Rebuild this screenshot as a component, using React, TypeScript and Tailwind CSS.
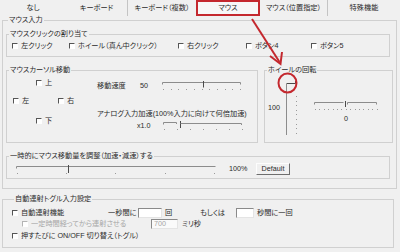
import type { ReactNode } from "react";

function Check({ label, disabled, className }: { label: string; disabled?: boolean; className?: string }) {
  return (
    <span className={`flex items-center ${className ?? ""}`}>
      <span
        className={`w-[6px] h-[6px] shrink-0 bg-white border border-r-white border-b-white ${
          disabled ? "border-l-[#b4b4b4] border-t-[#b4b4b4]" : "border-l-[#555] border-t-[#555]"
        }`}
      />
      <span className={`ml-[3px] whitespace-nowrap ${disabled ? "text-[#a6a6a6]" : ""}`}>{label}</span>
    </span>
  );
}

function Group({ title, className, children }: { title: string; className?: string; children?: ReactNode }) {
  return (
    <fieldset className={`border border-[#d0d0d0] ${className ?? ""}`}>
      <legend className="ml-[2px] px-[1px] leading-[8px] whitespace-nowrap">{title}</legend>
      {children}
    </fieldset>
  );
}

const dots = (n: number, step: number, x0: number, y: number) =>
  Array.from({ length: n }, (_, i) => (
    <rect key={i} x={Math.round(x0 + i * step)} y={y} width="1" height="1" fill="#9a9a9a" />
  ));

function Input({ value, disabled, className }: { value?: string; disabled?: boolean; className?: string }) {
  return (
    <span
      className={`flex items-center h-[10px] pl-[2px] border border-t-[#8a8a8a] border-l-[#8a8a8a] border-r-[#e4e4e4] border-b-[#e4e4e4] ${
        disabled ? "bg-[#fafafa] text-[#a6a6a6]" : "bg-white"
      } ${className ?? ""}`}
    >
      {value}
    </span>
  );
}

export default function App() {
  return (
    <div className="relative w-[400px] h-[252px] overflow-hidden bg-[#f0f0f0] text-[#2a2a2a] text-[7.2px] leading-[8px] [font-family:'Liberation_Sans','Noto_Sans_CJK_JP',sans-serif] [font-feature-settings:'palt']">
      {/* tab strip */}
      <div className="flex h-[16px]">
        <div className="w-[66px] flex items-center justify-center">なし</div>
        <div className="w-[62px] flex items-center justify-center border-r border-[#c4c4c4]">キーボード</div>
        <div className="w-[68px] flex items-center justify-center">キーボード（複数）</div>
        <div className="w-[64px] flex items-center justify-center border-2 border-[#c4282e] bg-[#f7f7f7]">マウス</div>
        <div className="w-[68px] flex items-center justify-center border-r border-[#c4c4c4]">マウス（位置指定）</div>
        <div className="flex-1 flex items-center justify-center">特殊機能</div>
      </div>

      <Group title="マウス入力" className="ml-[2px] w-[395px] px-[3px] pb-[9px]">
        <Group title="マウスクリックの割り当て" className="mt-[6px] w-[384px] pt-[4px] pb-[6px]">
          <div className="flex h-[8px] pl-[5px]">
            <Check label="左クリック" className="w-[57px]" />
            <Check label="ホイール（真ん中クリック）" className="w-[109px]" />
            <Check label="右クリック" className="w-[68px]" />
            <Check label="ボタン4" className="w-[65px]" />
            <Check label="ボタン5" />
          </div>
        </Group>

        <div className="flex gap-[6px] mt-[9px]">
          <Group title="マウスカーソル移動" className="w-[252px] h-[77px]">
            <div className="flex">
              <div className="w-[90px] flex flex-col">
                <div className="flex h-[8px] mt-[5px] pl-[29px]">
                  <Check label="上" />
                </div>
                <div className="flex h-[8px] mt-[10px] pl-[6px]">
                  <Check label="左" className="w-[45px]" />
                  <Check label="右" />
                </div>
                <div className="flex h-[8px] mt-[12px] pl-[29px]">
                  <Check label="下" />
                </div>
              </div>
              <div className="flex flex-col">
                <div className="flex items-center h-[10px] mt-[7px]">
                  <span className="w-[43px]">移動速度</span>
                  <span className="w-[22px]">50</span>
                  <svg width="80" height="10" className="block">
                    <path d="M0.5 3.5V1.5H78.5V3.5" stroke="#8c8c8c" fill="none" />
                    <path d="M41.5 0V6.5" stroke="#4a4a4a" fill="none" />
                    {dots(11, 7.7, 1, 8)}
                  </svg>
                </div>
                <div className="h-[8px] mt-[19px] whitespace-nowrap">アナログ入力加速(100%入力に向けて何倍加速)</div>
                <div className="flex items-center h-[10px] mt-[3px]">
                  <span className="ml-[40px] w-[26px]">x1.0</span>
                  <svg width="80" height="10" className="block">
                    <path d="M0.5 3.5V1.5H13.5V3" stroke="#8c8c8c" fill="none" />
                    <path d="M17.5 0V7" stroke="#4a4a4a" fill="none" />
                    <path d="M17.5 2.5H78.5V4" stroke="#8c8c8c" fill="none" />
                    {dots(7, 13, 1, 8)}
                  </svg>
                </div>
              </div>
            </div>
          </Group>

          <Group title="ホイールの回転" className="flex-1 h-[77px]">
            <div className="flex items-start">
              <span className="ml-[3px] mt-[30px] w-[15px]">100</span>
              <svg width="16" height="57" className="block mt-[6px]">
                <path d="M3.5 4V55" stroke="#8c8c8c" fill="none" />
                <path d="M3.5 3.5H12.5V1" stroke="#4a4a4a" fill="none" />
                {Array.from({ length: 9 }, (_, i) => (
                  <rect key={i} x="13" y={Math.round(16 + i * 4.6)} width="1" height="1" fill="#9a9a9a" />
                ))}
              </svg>
              <div className="ml-[15px] mt-[25px] flex flex-col w-[64px]">
                <svg width="64" height="13" className="block">
                  <path d="M0.5 5.5V3.5H29.5" stroke="#8c8c8c" fill="none" />
                  <path d="M31.5 2V8" stroke="#4a4a4a" fill="none" />
                  <path d="M33.5 5.5V3.5H62.5V5.5" stroke="#8c8c8c" fill="none" />
                  {dots(15, 4.4, 1, 10)}
                </svg>
                <span className="mt-[3px] text-center">0</span>
              </div>
            </div>
          </Group>
        </div>

        <Group title="一時的にマウス移動量を調整（加速・減速）する" className="mt-[9px] w-[384px] h-[27px]">
          <div className="flex items-start">
            <svg width="201" height="11" className="block ml-[9px] mt-[4px]">
              <path d="M0.5 4.5V2.5H199.5" stroke="#8c8c8c" fill="none" />
              <path d="M52.5 1V9" stroke="#4a4a4a" fill="none" />
              {dots(5, 49.2, 1, 9)}
            </svg>
            <span className="ml-[12px] mt-[5px] w-[27px]">100%</span>
            <span className="mt-[3px] w-[34px] h-[12px] flex items-center justify-center bg-[#f0f0f0] border border-t-[#fdfdfd] border-l-[#fdfdfd] border-r-[#6e6e6e] border-b-[#6e6e6e]">
              Default
            </span>
          </div>
        </Group>
      </Group>

      <Group title="自動連射トグル入力設定" className="mt-[6px] ml-[2px] w-[392px] h-[53px] pl-[9px]">
        <div className="flex items-center h-[11px] mt-[4px]">
          <Check label="自動連射機能" className="w-[96px]" />
          <span className="w-[30px]">一秒間に</span>
          <Input className="w-[24px]" />
          <span className="ml-[3px] w-[35px]">回</span>
          <span className="w-[36px]">もしくは</span>
          <Input className="w-[18px]" />
          <span className="ml-[3px]">秒間に一回</span>
        </div>
        <div className="flex items-center h-[12px]">
          <Check label="一定時間経ってから連射させる" disabled className="ml-[10px] w-[129px]" />
          <Input value="700" disabled className="w-[27px]" />
          <span className="ml-[4px]">ミリ秒</span>
        </div>
        <div className="flex items-center h-[12px]">
          <Check label="押すたびに ON/OFF 切り替え（トグル）" />
        </div>
      </Group>

      {/* annotation overlay */}
      <svg width="400" height="252" className="absolute inset-0 pointer-events-none">
        <path d="M252 19L279.5 62" stroke="#c4282e" strokeWidth="2" fill="none" />
        <path d="M270 56L280.5 64L282 52" stroke="#c4282e" strokeWidth="2" fill="none" />
        <ellipse cx="287.5" cy="83" rx="9" ry="9.5" stroke="#c4282e" strokeWidth="2" fill="none" />
      </svg>
    </div>
  );
}
